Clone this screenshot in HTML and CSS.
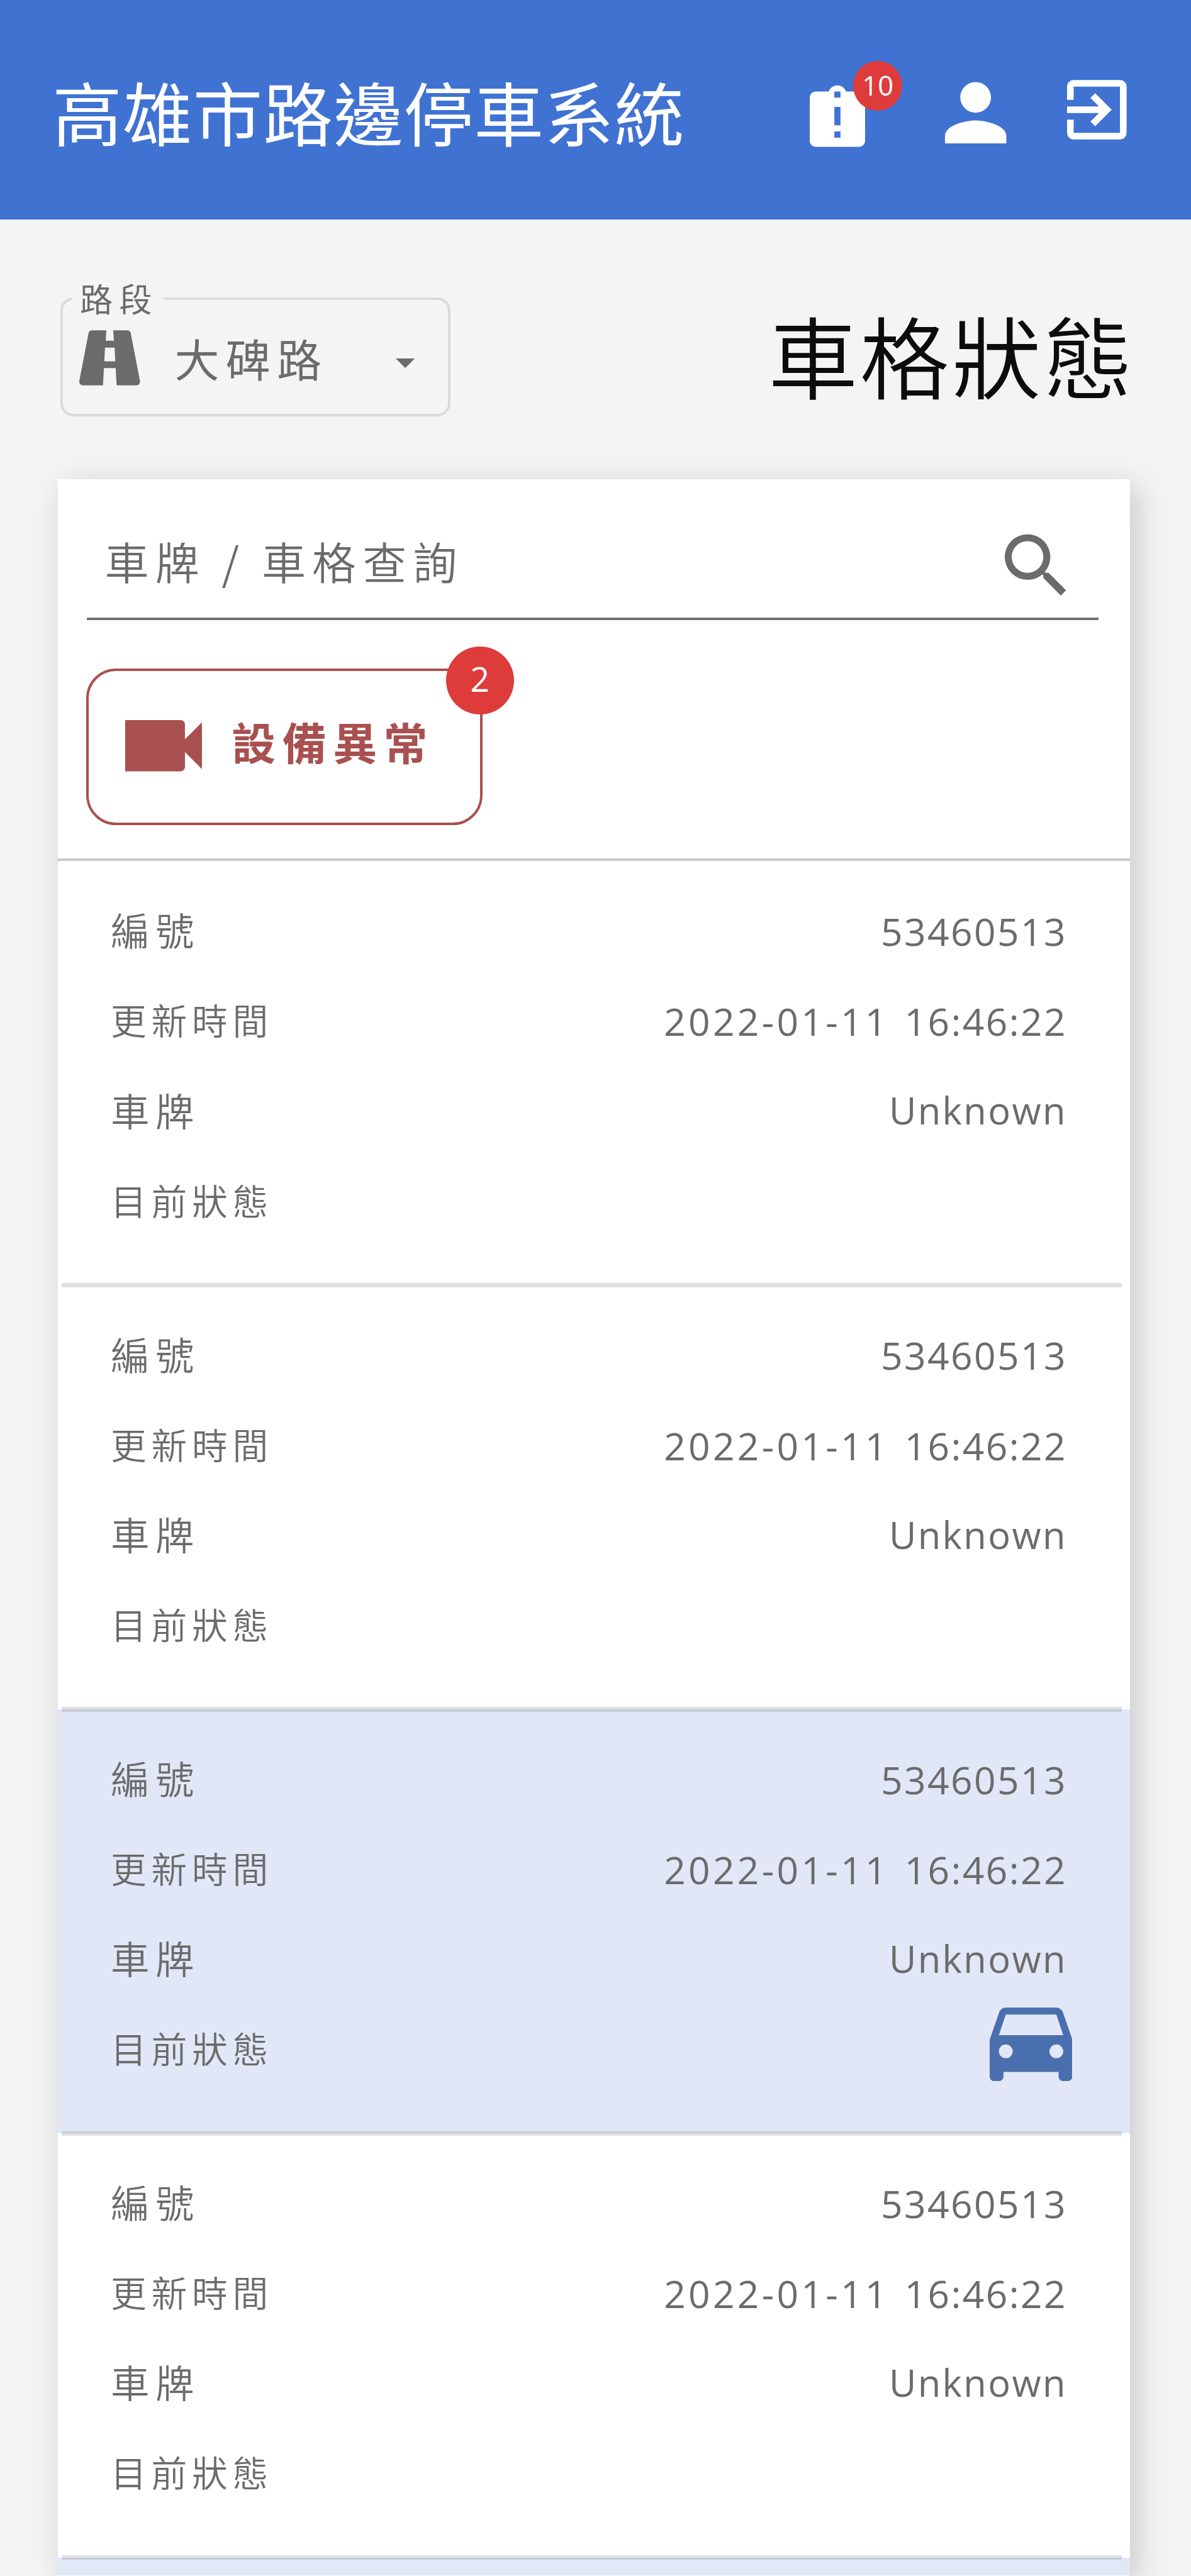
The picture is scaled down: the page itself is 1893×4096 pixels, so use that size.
FILE: index.html
```html
<!DOCTYPE html>
<html lang="zh-Hant">
<head>
<meta charset="utf-8">
<title>高雄市路邊停車系統</title>
<link rel="stylesheet" href="styles.css">
</head>
<body>
<header class="topbar">
  <h1 class="brand">高雄市路邊停車系統</h1>
  <nav class="actions">
    <a class="action action-alert">
      <svg viewBox="3 1 18 20"><path fill-rule="evenodd" d="M19 3h-4.18C14.4 1.84 13.3 1 12 1s-2.4.84-2.82 2H5c-1.1 0-2 .9-2 2v14c0 1.1.9 2 2 2h14c1.1 0 2-.9 2-2V5c0-1.1-.9-2-2-2zM13 18h-2v-2h2zM13 14h-2V8h2zM13 5h-2V3h2z"/></svg>
      <span class="badge badge-small">10</span>
    </a>
    <a class="action action-user">
      <svg viewBox="4 4 16 16"><path d="M12 12c2.21 0 4-1.79 4-4s-1.79-4-4-4-4 1.79-4 4 1.79 4 4 4zm0 2c-2.67 0-8 1.34-8 4v2h16v-2c0-2.66-5.33-4-8-4z"/></svg>
    </a>
    <a class="action action-exit">
      <svg viewBox="3 3 18 18"><path d="M19 3H5c-1.11 0-2 .89-2 2v4h2V5h14v14H5v-4H3v4a2 2 0 0 0 2 2h14a2 2 0 0 0 2-2V5c0-1.11-.9-2-2-2zM10.08 15.58L11.5 17l5-5-5-5-1.42 1.41L12.67 11H3v2h9.67z"/></svg>
    </a>
  </nav>
</header>

<section class="toolbar">
  <fieldset class="select">
    <legend>路段</legend>
    <div class="select-body">
      <svg class="road" viewBox="3.1 4 17.7 16"><path fill-rule="evenodd" d="M18.1 4.8C18 4.3 17.6 4 17.1 4H13l.2 3h-2.4L11 4H6.8c-.5 0-.9.4-1 .8l-2.7 14c-.1.6.4 1.2 1 1.2H10l.3-5h3.4l.3 5h5.8c.6 0 1.1-.6 1-1.2zM10.4 13l.2-4h2.8l.2 4z"/></svg>
      <span class="select-value">大碑路</span>
      <svg class="caret" viewBox="0 0 10 5"><path d="M0 0l5 5 5-5z"/></svg>
    </div>
  </fieldset>
  <h2 class="page-title">車格狀態</h2>
</section>

<main class="card">
  <div class="search">
    <span class="search-text">車牌 / 車格查詢</span>
    <svg class="search-icon" viewBox="3 3 17.5 17.5"><path d="M15.5 14h-.79l-.28-.27A6.471 6.471 0 0 0 16 9.5 6.5 6.5 0 1 0 9.5 16c1.61 0 3.09-.59 4.23-1.57l.27.28v.79l5 4.99L20.49 19l-4.99-5zm-6 0C7.01 14 5 11.99 5 9.5S7.01 5 9.5 5 14 7.01 14 9.5 11.99 14 9.5 14z"/></svg>
  </div>
  <div class="filters">
    <button class="chip">
      <svg viewBox="3 6 18 12"><path d="M17 10.5V7c0-.55-.45-1-1-1H3v12h13c.55 0 1-.45 1-1v-3.5l4 4v-11z"/></svg>
      <span class="chip-label">設備異常</span>
      <span class="badge badge-large">2</span>
    </button>
  </div>

  <dl class="slot">
    <div class="line"><dt>編號</dt><dd>53460513</dd></div>
    <div class="line"><dt class="long">更新時間</dt><dd><span class="date">2022-01-11 </span>16:46:22</dd></div>
    <div class="line"><dt>車牌</dt><dd class="plate">Unknown</dd></div>
    <div class="line"><dt class="long">目前狀態</dt><dd></dd></div>
  </dl>
  <dl class="slot">
    <div class="line"><dt>編號</dt><dd>53460513</dd></div>
    <div class="line"><dt class="long">更新時間</dt><dd><span class="date">2022-01-11 </span>16:46:22</dd></div>
    <div class="line"><dt>車牌</dt><dd class="plate">Unknown</dd></div>
    <div class="line"><dt class="long">目前狀態</dt><dd></dd></div>
  </dl>
  <dl class="slot occupied">
    <div class="line"><dt>編號</dt><dd>53460513</dd></div>
    <div class="line"><dt class="long">更新時間</dt><dd><span class="date">2022-01-11 </span>16:46:22</dd></div>
    <div class="line"><dt>車牌</dt><dd class="plate">Unknown</dd></div>
    <div class="line"><dt class="long">目前狀態</dt><dd class="car"><svg viewBox="3 5 18 16"><path fill-rule="evenodd" d="M18.92 6.01C18.72 5.42 18.16 5 17.5 5h-11c-.66 0-1.21.42-1.42 1.01L3 12v8c0 .55.45 1 1 1h1c.55 0 1-.45 1-1v-1h12v1c0 .55.45 1 1 1h1c.55 0 1-.45 1-1v-8zM6.5 16a1.5 1.5 0 1 1 0-3 1.5 1.5 0 0 1 0 3zM17.5 16a1.5 1.5 0 1 1 0-3 1.5 1.5 0 0 1 0 3zM5 11l1.5-4.5h11L19 11z"/></svg></dd></div>
  </dl>
  <dl class="slot">
    <div class="line"><dt>編號</dt><dd>53460513</dd></div>
    <div class="line"><dt class="long">更新時間</dt><dd><span class="date">2022-01-11 </span>16:46:22</dd></div>
    <div class="line"><dt>車牌</dt><dd class="plate">Unknown</dd></div>
    <div class="line"><dt class="long">目前狀態</dt><dd></dd></div>
  </dl>
  <dl class="slot slot-cut occupied"></dl>
</main>
</body>
</html>
```
FILE: styles.css
```css
* { box-sizing: border-box; margin: 0; padding: 0; }

html { font-size: 94.64px; }

body {
  display: flex;
  flex-direction: column;
  height: 4096px;
  overflow: hidden;
  background: #f4f4f4;
  color: #6b6b6b;
  font-family: "Noto Sans CJK TC", sans-serif;
}

svg { display: block; fill: currentColor; }

.topbar {
  display: flex;
  align-items: flex-start;
  justify-content: space-between;
  flex: none;
  height: 3.69rem;
  padding: 0 1.08rem 0 .88rem;
  background: #4072d2;
  color: #fff;
}

.brand {
  padding-top: 1.065rem;
  font-size: 1.17rem;
  line-height: 1.6rem;
  font-weight: 400;
  letter-spacing: .01rem;
}

.actions { display: flex; align-items: flex-start; }
.action { position: relative; }
.action-alert { margin-top: 1.43rem; }
.action-alert svg { width: .93rem; height: 1.05rem; }
.action-user { margin: 1.37rem 1.02rem 0 1.34rem; }
.action-user svg { width: 1.03rem; height: 1.04rem; }
.action-exit { margin-top: 1.345rem; }
.action-exit svg { width: 1rem; height: 1.005rem; }

.badge {
  position: absolute;
  display: flex;
  align-items: center;
  justify-content: center;
  border-radius: 50%;
  background: #de3b3b;
  color: #fff;
  font-family: "Open Sans", sans-serif;
  font-weight: 500;
  letter-spacing: 0;
}
.badge-small { top: -.41rem; left: .73rem; width: .82rem; height: .84rem; font-size: .46rem; padding-bottom: .03rem; }
.badge-large { top: -.41rem; right: -.57rem; width: 1.14rem; height: 1.14rem; font-size: .57rem; padding-bottom: .05rem; line-height: 1; }

.toolbar {
  display: flex;
  align-items: flex-start;
  justify-content: space-between;
  flex: none;
  height: 4.36rem;
  padding: 0 .94rem 0 1.01rem;
}

.select {
  width: 6.56rem;
  height: 2.3rem;
  margin-top: 1.01rem;
  padding-left: .28rem;
  border: .045rem solid #dadada;
  border-radius: .22rem;
}
.select legend {
  height: .64rem;
  margin-left: -.12rem;
  padding: 0 .08rem 0 .13rem;
  font-size: .55rem;
  line-height: .61rem;
  letter-spacing: .11rem;
}
.select-body { display: flex; align-items: flex-start; }
.road { width: 1.02rem; height: .93rem; margin-top: .21rem; }
.select-value {
  margin: .115rem 0 0 .58rem;
  font-size: .75rem;
  line-height: 1.1rem;
  letter-spacing: .11rem;
}
.caret { width: .32rem; height: .16rem; margin: .68rem 0 0 1.13rem; }

.page-title {
  margin-top: 1.26rem;
  color: #0c0c0c;
  font-size: 1.5rem;
  line-height: 2rem;
  font-weight: 350;
  letter-spacing: .04rem;
}

.card {
  flex: 1;
  min-height: 0;
  width: 18.01rem;
  margin-left: .97rem;
  background: #fff;
  box-shadow: .12rem .12rem .5rem rgba(0, 0, 0, .18);
}

.search {
  display: flex;
  justify-content: space-between;
  height: 2.37rem;
  margin: 0 .53rem 0 .49rem;
  padding: .92rem .55rem 0 .3rem;
  border-bottom: .05rem solid #737373;
}
.search-text {
  margin-top: -.09rem;
  font-size: .74rem;
  line-height: 1.1rem;
  letter-spacing: .107rem;
  font-weight: 350;
  white-space: pre;
}
.search-icon { width: 1.03rem; height: 1.04rem; }

.filters {
  height: 4.05rem;
  padding: .81rem 0 0 .48rem;
  border-bottom: .045rem solid #cacaca;
}
.chip {
  position: relative;
  display: flex;
  align-items: center;
  width: 6.65rem;
  height: 2.63rem;
  padding: 0 0 .03rem .61rem;
  border: .05rem solid #a95050;
  border-radius: .5rem;
  background: none;
  color: #a95050;
}
.chip svg { width: 1.29rem; height: .86rem; margin-right: .5rem; }
.chip-label {
  padding-bottom: .15rem;
  font: 700 .74rem/1.1rem "Noto Sans CJK TC", sans-serif;
  letter-spacing: .11rem;
}

.slot {
  position: relative;
  height: 7.125rem;
  padding: .39rem 1.06rem 0 .89rem;
}
.slot:not(:last-child)::after {
  content: "";
  position: absolute;
  z-index: 1;
  left: .07rem;
  right: .14rem;
  bottom: -.04rem;
  height: .08rem;
  background: rgba(0, 0, 0, .12);
}
.slot-cut { height: .3rem; padding: 0; }
.occupied { background: #e1e7f7; }

.line {
  display: flex;
  justify-content: space-between;
  height: 1.512rem;
  line-height: 1.512rem;
}
.line dt { font-size: .65rem; letter-spacing: .1rem; font-weight: 350; }
.line .long { font-size: .6rem; letter-spacing: .082rem; }
.line dd {
  padding-top: .03rem;
  font-family: "Open Sans", sans-serif;
  font-size: .64rem;
  letter-spacing: .025rem;
}
.date { letter-spacing: .045rem; word-spacing: .04rem; }
.line .plate { padding-top: .01rem; font-size: .63rem; }
.line .car { padding: .08rem 0 0; margin-right: -.09rem; color: #4a6fae; }
.car svg { width: 1.39rem; height: 1.24rem; }
```
